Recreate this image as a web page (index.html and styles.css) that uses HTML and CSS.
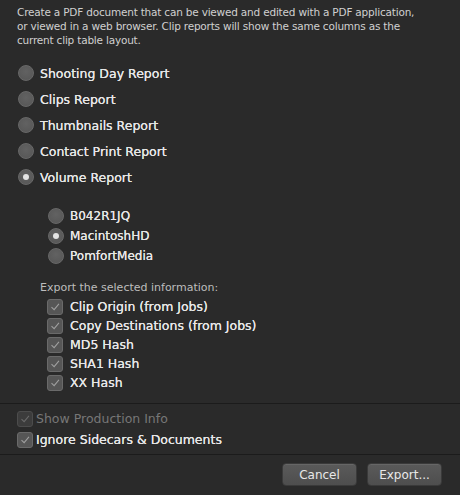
FILE: index.html
```html
<!DOCTYPE html>
<html>
<head>
<meta charset="utf-8">
<link rel="stylesheet" href="styles.css">
</head>
<body>
<div class="dialog">
  <p class="desc">Create a PDF document that can be viewed and edited with a PDF application, or viewed in a web browser. Clip reports will show the same columns as the current clip table layout.</p>

  <div class="reports">
    <div class="row report"><span class="radio"></span><span class="label">Shooting Day Report</span></div>
    <div class="row report"><span class="radio"></span><span class="label">Clips Report</span></div>
    <div class="row report"><span class="radio"></span><span class="label">Thumbnails Report</span></div>
    <div class="row report"><span class="radio"></span><span class="label">Contact Print Report</span></div>
    <div class="row report"><span class="radio on"></span><span class="label">Volume Report</span></div>
  </div>

  <div class="volumes">
    <div class="row vol"><span class="radio"></span><span class="label">B042R1JQ</span></div>
    <div class="row vol"><span class="radio on"></span><span class="label">MacintoshHD</span></div>
    <div class="row vol"><span class="radio"></span><span class="label">PomfortMedia</span></div>
  </div>

  <div class="info-title">Export the selected information:</div>
  <div class="infos">
    <div class="row chk"><span class="box"><svg viewBox="0 0 16 16"><path d="M4 8.2 L7 11 L12.5 4.5"/></svg></span><span class="label">Clip Origin (from Jobs)</span></div>
    <div class="row chk"><span class="box"><svg viewBox="0 0 16 16"><path d="M4 8.2 L7 11 L12.5 4.5"/></svg></span><span class="label">Copy Destinations (from Jobs)</span></div>
    <div class="row chk"><span class="box"><svg viewBox="0 0 16 16"><path d="M4 8.2 L7 11 L12.5 4.5"/></svg></span><span class="label">MD5 Hash</span></div>
    <div class="row chk"><span class="box"><svg viewBox="0 0 16 16"><path d="M4 8.2 L7 11 L12.5 4.5"/></svg></span><span class="label">SHA1 Hash</span></div>
    <div class="row chk"><span class="box"><svg viewBox="0 0 16 16"><path d="M4 8.2 L7 11 L12.5 4.5"/></svg></span><span class="label">XX Hash</span></div>
  </div>

  <div class="options">
    <div class="row opt disabled"><span class="box"><svg viewBox="0 0 16 16"><path d="M4 8.2 L7 11 L12.5 4.5"/></svg></span><span class="label">Show Production Info</span></div>
    <div class="row opt"><span class="box"><svg viewBox="0 0 16 16"><path d="M4 8.2 L7 11 L12.5 4.5"/></svg></span><span class="label">Ignore Sidecars &amp; Documents</span></div>
  </div>

  <div class="buttons">
    <button class="btn">Cancel</button>
    <button class="btn">Export...</button>
  </div>
</div>
</body>
</html>
```

FILE: styles.css
```css
* { box-sizing: border-box; }
html, body {
  margin: 0;
  padding: 0;
  background: #2a2a2a;
  width: 460px;
  height: 495px;
  overflow: hidden;
}
.dialog {
  font-family: "DejaVu Sans", "Liberation Sans", sans-serif;
  color: #e6e6e6;
  display: flex;
  flex-direction: column;
  height: 495px;
}
.desc {
  margin: 0;
  padding: 5px 36px 0 17px;
  font-size: 10.5px;
  letter-spacing: -0.2px;
  line-height: 14px;
  color: #d0d0d0;
}
.row {
  display: flex;
  align-items: center;
}
.label {
  text-shadow: 0 0 0.4px #fff;
}
.reports {
  margin-top: 13px;
  padding-left: 18px;
  display: flex;
  flex-direction: column;
}
.report {
  height: 26px;
  font-size: 12.5px;
  gap: 6px;
}
.radio {
  width: 16px;
  height: 16px;
  border-radius: 50%;
  background: radial-gradient(circle at 50% 40%, #626262, #555);
  border: 1px solid #686868;
  display: flex;
  align-items: center;
  justify-content: center;
  flex: none;
}
.radio.on::after {
  content: "";
  width: 6px;
  height: 6px;
  border-radius: 50%;
  background: #e4e4e4;
}
.volumes {
  margin-top: 16px;
  padding-left: 48px;
  display: flex;
  flex-direction: column;
}
.vol {
  height: 20px;
  font-size: 12px;
  gap: 6px;
}
.info-title {
  margin-top: 12px;
  padding-left: 40px;
  height: 19px;
  line-height: 19px;
  font-size: 11px;
  color: #bdbdbd;
}
.infos {
  padding-left: 47px;
  display: flex;
  flex-direction: column;
}
.chk {
  height: 19px;
  font-size: 12.5px;
  gap: 7px;
}
.box {
  width: 16px;
  height: 16px;
  border-radius: 3px;
  background: #565656;
  border: 1px solid #6a6a6a;
  flex: none;
  display: flex;
}
.box svg {
  width: 14px;
  height: 14px;
}
.box path {
  fill: none;
  stroke: #a0a0a0;
  stroke-width: 1.2;
}
.options {
  margin-top: 11px;
  border-top: 1px solid #1b1b1b;
  padding-top: 4px;
  padding-left: 17px;
  display: flex;
  flex-direction: column;
}
.opt {
  height: 21px;
  font-size: 12.5px;
  gap: 3px;
}
.opt.disabled .label {
  color: #777;
  text-shadow: none;
}
.opt.disabled .box {
  background: #3c3c3c;
  border-color: #4c4c4c;
}
.opt.disabled .box path {
  stroke: #6a6a6a;
}
.buttons {
  margin-top: 4px;
  border-top: 1px solid #1b1b1b;
  padding: 8px 18px 0 0;
  display: flex;
  justify-content: flex-end;
  gap: 10px;
}
.btn {
  width: 75px;
  height: 23px;
  border-radius: 4px;
  border: 1px solid #3a3a3a;
  background: linear-gradient(#5a5a5a, #4e4e4e);
  color: #e8e8e8;
  font-family: "DejaVu Sans", "Liberation Sans", sans-serif;
  font-size: 12px;
  padding: 0;
  box-shadow: inset 0 1px 0 #666;
}
```
